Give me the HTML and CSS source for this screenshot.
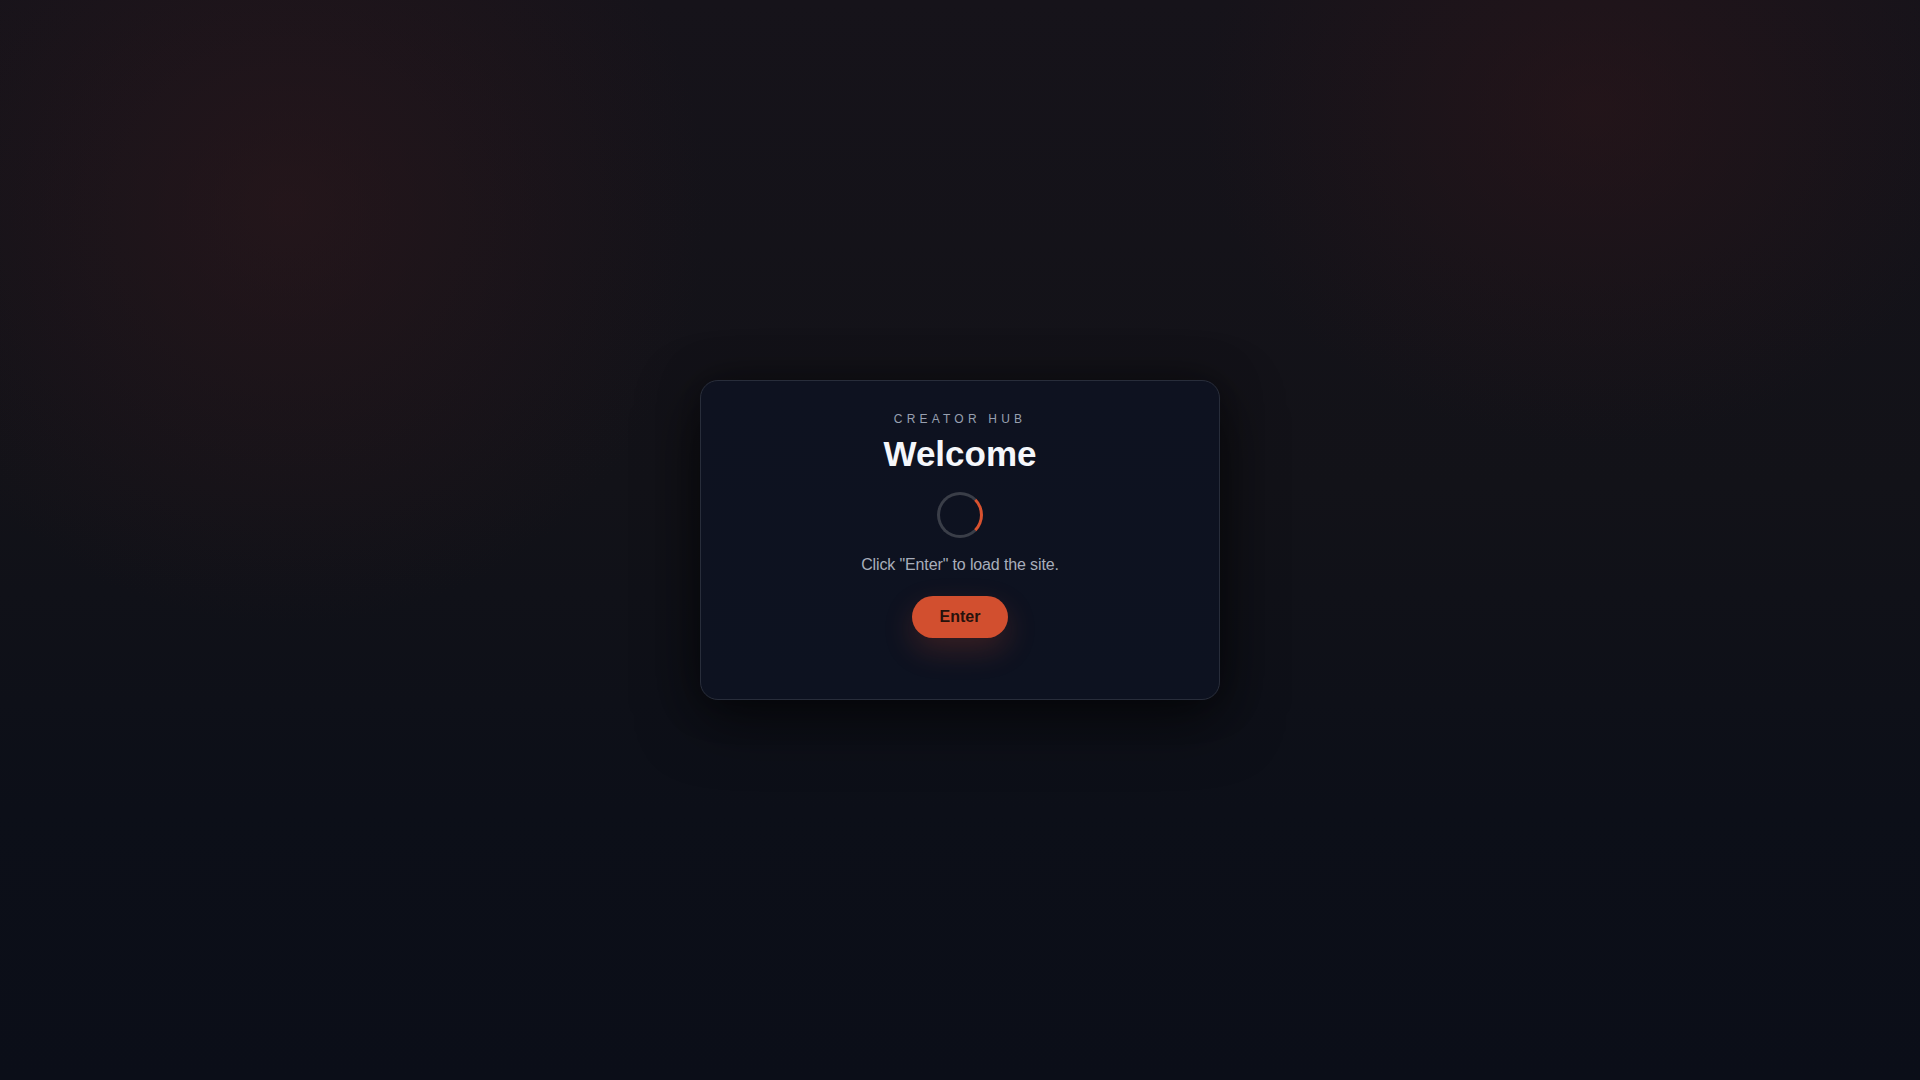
FILE: index.html
```html
<!DOCTYPE html>
<html lang="en">
<head>
<meta charset="utf-8">
<title>Creator Hub</title>
<link rel="stylesheet" href="styles.css">
</head>
<body>
<main class="stage">
  <section class="card">
    <div class="eyebrow">CREATOR HUB</div>
    <h1 class="title">Welcome</h1>
    <div class="spinner"></div>
    <p class="hint">Click "Enter" to load the site.</p>
    <button class="enter" type="button">Enter</button>
  </section>
</main>
</body>
</html>
```

FILE: styles.css
```css
* { box-sizing: border-box; }
html, body { margin: 0; height: 100%; }
body {
  font-family: "Liberation Sans", Arial, sans-serif;
  background-color: #0c0f18;
  background-image:
    radial-gradient(ellipse 600px 600px at 15% 19%, rgba(48, 24, 28, 0.55), rgba(48, 24, 28, 0) 70%),
    radial-gradient(ellipse 560px 480px at 83% 10%, rgba(48, 22, 26, 0.5), rgba(48, 22, 26, 0) 70%),
    linear-gradient(180deg, #16131a 0%, #121218 45%, #0c0f18 75%, #0b0e18 100%);
  overflow: hidden;
}
.stage {
  height: 100vh;
  display: flex;
  align-items: center;
  justify-content: center;
}
.card {
  width: 520px;
  height: 320px;
  padding: 31px 40px;
  display: flex;
  flex-direction: column;
  align-items: center;
  border: 1px solid #282d3a;
  border-radius: 18px;
  background: linear-gradient(180deg, #0e1220 0%, #0d1220 100%);
  box-shadow: 0 20px 60px rgba(0, 0, 0, 0.55), 0 0 40px rgba(0, 0, 0, 0.35);
}
.eyebrow {
  font-size: 12px;
  line-height: 14px;
  letter-spacing: 0.35em;
  color: #98a0b0;
}
.title {
  margin: 7px 0 0;
  font-size: 35px;
  line-height: 42px;
  font-weight: 700;
  color: #f5f7fb;
}
.spinner {
  margin-top: 17px;
  width: 46px;
  height: 46px;
  border-radius: 50%;
  border: 3px solid #3a3e48;
  border-right-color: #d9522f;
}
.hint {
  margin: 15px 0 0;
  font-size: 16px;
  line-height: 24px;
  letter-spacing: -0.13px;
  color: #a8aebb;
}
.enter {
  margin-top: 19px;
  height: 42px;
  padding: 0 28px;
  border: 0;
  border-radius: 21px;
  background: #d24f2f;
  color: #26120c;
  font-family: "Liberation Sans", Arial, sans-serif;
  font-size: 16px;
  font-weight: 700;
  box-shadow: 0 12px 30px rgba(210, 79, 47, 0.22);
}
```
